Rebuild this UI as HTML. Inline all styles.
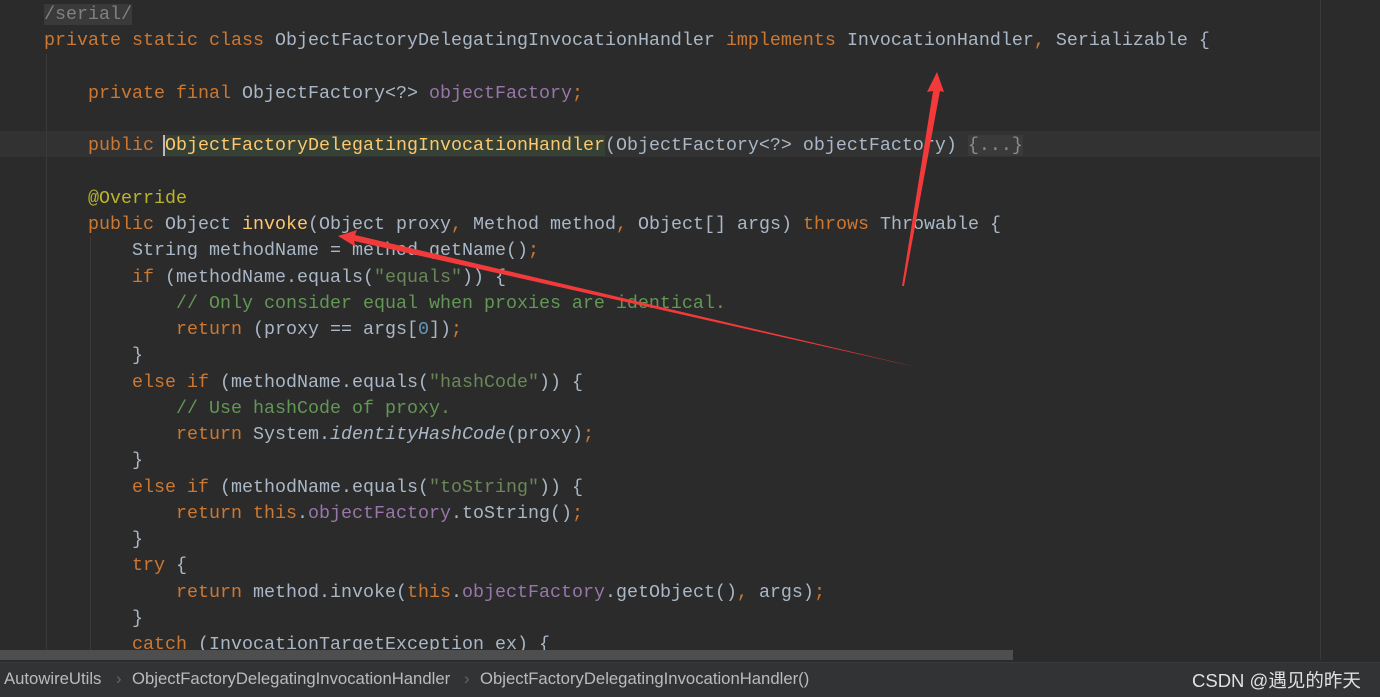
<!DOCTYPE html>
<html><head><meta charset="utf-8"><style>
html,body{margin:0;padding:0;}
html{height:697px;overflow:hidden;}
body{width:1380px;height:697px;background:#2b2b2b;overflow:hidden;position:relative;font-family:"Liberation Mono",monospace;}
.code{position:absolute;left:0;top:2px;font-size:18.33px;line-height:26.25px;color:#a9b7c6;white-space:normal;}
.l{height:26.25px;white-space:pre;}
.k{color:#cc7832}.p{color:#9876aa}.s{color:#6a8759}.c{color:#629755}.a{color:#bbb529}.m{color:#ffc66d}.n{color:#6897bb}
.cur{position:absolute;left:0;top:131px;width:1320px;height:26px;background:#323232;}
.hl{background:#344134}
.fold{background:#3a3a3a;color:#8c8c8c}
.guide{position:absolute;width:1px;background:#3a3a3a;}
.bar{position:absolute;left:0;top:662px;width:1380px;height:35px;background:#313335;border-top:1px solid #3a3a3a;font-family:"Liberation Sans",sans-serif;font-size:16.7px;color:#bbbbbb;}
.bar span{position:absolute;top:6px;white-space:nowrap;}
.sep{color:#666}
</style></head><body>
<div class="cur"></div>
<div style="position:absolute;left:1320px;top:0;width:1px;height:662px;background:#3a3a3a"></div>
<div class="guide" style="left:46px;top:54px;height:608px"></div>
<div class="guide" style="left:90px;top:236px;height:426px"></div>
<div class="code"><div class="l">    <span style="background:#3a3a3a;color:#808080">/serial/</span></div><div class="l">    <span class="k">private static class </span>ObjectFactoryDelegatingInvocationHandler <span class="k">implements </span>InvocationHandler<span class="k">, </span>Serializable {</div><div class="l"> </div><div class="l">        <span class="k">private final </span>ObjectFactory&lt;?&gt; <span class="p">objectFactory</span><span class="k">;</span></div><div class="l"> </div><div class="l">        <span class="k">public </span><span class="hl m" style="border-left:2px solid #bbb;margin-left:-2px">ObjectFactoryDelegatingInvocationHandler</span>(ObjectFactory&lt;?&gt; objectFactory) <span class="fold">{...}</span></div><div class="l"> </div><div class="l">        <span class="a">@Override</span></div><div class="l">        <span class="k">public </span>Object <span class="m">invoke</span>(Object proxy<span class="k">, </span>Method method<span class="k">, </span>Object[] args) <span class="k">throws </span>Throwable {</div><div class="l">            String methodName = method.getName()<span class="k">;</span></div><div class="l">            <span class="k">if </span>(methodName.equals(<span class="s">"equals"</span>)) {</div><div class="l">                <span class="c">// Only consider equal when proxies are identical.</span></div><div class="l">                <span class="k">return </span>(proxy == args[<span class="n">0</span>])<span class="k">;</span></div><div class="l">            }</div><div class="l">            <span class="k">else if </span>(methodName.equals(<span class="s">"hashCode"</span>)) {</div><div class="l">                <span class="c">// Use hashCode of proxy.</span></div><div class="l">                <span class="k">return </span>System.<i>identityHashCode</i>(proxy)<span class="k">;</span></div><div class="l">            }</div><div class="l">            <span class="k">else if </span>(methodName.equals(<span class="s">"toString"</span>)) {</div><div class="l">                <span class="k">return this</span>.<span class="p">objectFactory</span>.toString()<span class="k">;</span></div><div class="l">            }</div><div class="l">            <span class="k">try </span>{</div><div class="l">                <span class="k">return </span>method.invoke(<span class="k">this</span>.<span class="p">objectFactory</span>.getObject()<span class="k">, </span>args)<span class="k">;</span></div><div class="l">            }</div><div class="l">            <span class="k">catch </span>(InvocationTargetException ex) {</div></div>
<div style="position:absolute;left:0;top:650px;width:1013px;height:10px;background:#4e4e4e"></div>
<div style="position:absolute;left:0;top:660px;width:1380px;height:2px;background:#2b2b2b"></div>
<svg style="position:absolute;left:0;top:0" width="1380" height="697">
<polygon points="937,72 927,92 933,91 902,286 904,286 940,91 944,92" fill="#f23a3a"/>
<polygon points="338,236 357,230 355,235 916,367 354,241 356,247" fill="#f23a3a"/>
</svg>
<div class="bar">
<span style="left:4px">AutowireUtils</span>
<span class="sep" style="left:116px">›</span>
<span style="left:132px">ObjectFactoryDelegatingInvocationHandler</span>
<span class="sep" style="left:464px">›</span>
<span style="left:480px">ObjectFactoryDelegatingInvocationHandler()</span>
<span style="left:1192px;color:#e0e0e0;font-family:'Liberation Sans','Noto Sans CJK SC',sans-serif;font-size:18.5px;top:4px">CSDN @遇见的昨天</span>
</div>
</body></html>
